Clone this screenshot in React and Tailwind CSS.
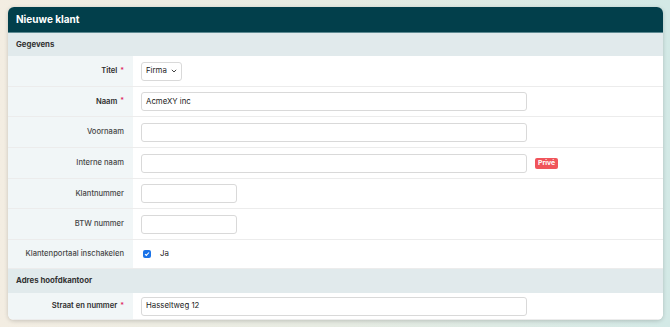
import React from "react";

const font = { fontFamily: "Inter, 'Noto Sans', sans-serif" };

function Req() {
  return <span className="text-[#e0245e] ml-[3px] text-[7px]">*</span>;
}

function Row({ label, req, bold, h, children }) {
  return (
    <div className={`flex border-b border-[#ececec] ${h}`}>
      <div className={`w-[125px] shrink-0 bg-[#f1f6f7] flex items-center justify-end pr-[9px] text-[7.6px] ${bold ? "font-semibold text-[#2e2e2e]" : "font-medium text-[#474747]"}`}>
        {label}
        {req && <Req />}
      </div>
      <div className="flex-1 flex items-center pl-[8px] bg-white">{children}</div>
    </div>
  );
}

function Input({ w, value }) {
  return (
    <div className={`${w} h-[19px] border border-[#d9d9d9] rounded-[3px] bg-white flex items-center px-[4px] text-[7.8px] text-[#222]`}>
      {value}
    </div>
  );
}

function Section({ title, h }) {
  return (
    <div className={`${h} bg-[#e1eaec] flex items-center pl-[8px] text-[7.8px] font-bold text-[#333]`}>
      {title}
    </div>
  );
}

export default function App() {
  return (
    <div
      className="w-[670px] h-[327px] overflow-hidden bg-gradient-to-r from-[#f3ede2] via-[#e6ebe2] to-[#d3e9e6] pt-[7px] pl-[8px]"
      style={font}
    >
      <div className="w-[655px] h-[313px] bg-white rounded-[6px] overflow-hidden shadow-[0_1px_4px_rgba(0,0,0,0.18)] flex flex-col">
        <div className="h-[26px] bg-[#023f4b] flex items-center pl-[8px] text-white text-[10px] font-bold border-b border-[#5d8a92]">
          Nieuwe klant
        </div>
        <Section title="Gegevens" h="h-[23px]" />
        <Row label="Titel" req bold h="h-[31px]">
          <div className="w-[41px] h-[19px] border border-[#d9d9d9] rounded-[3px] bg-white flex items-center justify-between pl-[4px] pr-[4px] text-[7.8px] text-[#222]">
            <span>Firma</span>
            <svg width="6" height="4" viewBox="0 0 6 4" fill="none">
              <path d="M0.8 0.8l2.2 2.2L5.2 0.8" stroke="#444" strokeWidth="1" />
            </svg>
          </div>
        </Row>
        <Row label="Naam" req bold h="h-[30px]">
          <Input w="w-[386px]" value="AcmeXY inc" />
        </Row>
        <Row label="Voornaam" h="h-[31px]">
          <Input w="w-[386px]" value="" />
        </Row>
        <Row label="Interne naam" h="h-[31px]">
          <Input w="w-[386px]" value="" />
          <span className="ml-[8px] bg-[#f0545b] text-white text-[6.8px] font-bold px-[3px] h-[11px] flex items-center rounded-[2px]">
            Privé
          </span>
        </Row>
        <Row label="Klantnummer" h="h-[30px]">
          <Input w="w-[96px]" value="" />
        </Row>
        <Row label="BTW nummer" h="h-[31px]">
          <Input w="w-[96px]" value="" />
        </Row>
        <Row label="Klantenportaal inschakelen" h="h-[29px]">
          <div className="ml-[2px] w-[8px] h-[8px] rounded-[2px] bg-[#1a73e8] flex items-center justify-center">
            <svg width="6" height="6" viewBox="0 0 6 6" fill="none">
              <path d="M1 3.2l1.3 1.2L5 1.5" stroke="white" strokeWidth="1.1" />
            </svg>
          </div>
          <span className="ml-[9px] text-[7.8px] text-[#222]">Ja</span>
        </Row>
        <Section title="Adres hoofdkantoor" h="h-[24px]" />
        <Row label="Straat en nummer" req bold h="h-[27px]">
          <Input w="w-[386px]" value="Hasseltweg 12" />
        </Row>
      </div>
    </div>
  );
}
